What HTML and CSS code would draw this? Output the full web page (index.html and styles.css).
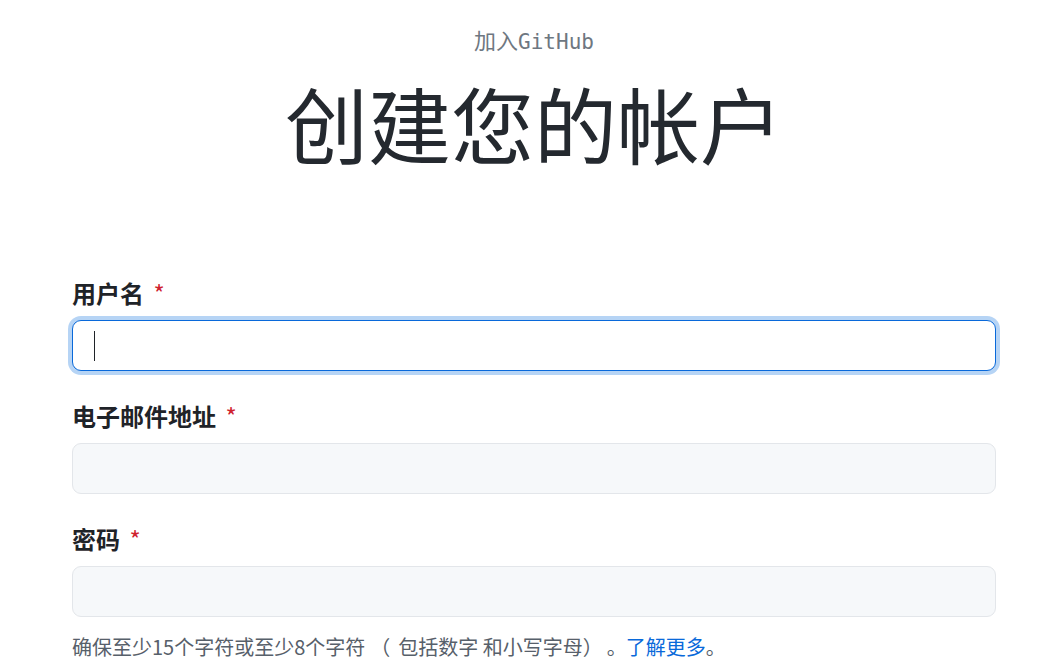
FILE: index.html
```html
<!DOCTYPE html>
<html lang="zh-CN">
<head>
<meta charset="utf-8">
<title>创建您的帐户</title>
<link rel="stylesheet" href="styles.css">
</head>
<body>
<main class="page">
  <header class="head">
    <p class="kicker">加入<span class="mono">GitHub</span></p>
    <h1 class="title">创建您的帐户</h1>
  </header>
  <form class="form">
    <div class="field">
      <label class="label">用户名 <span class="req">*</span></label>
      <div class="input focus"><span class="caret"></span></div>
    </div>
    <div class="field">
      <label class="label">电子邮件地址 <span class="req">*</span></label>
      <div class="input"></div>
    </div>
    <div class="field">
      <label class="label">密码 <span class="req">*</span></label>
      <div class="input"></div>
      <p class="hint">确保至少15个字符或至少8个字符<span class="paren-open">（</span>包括数字 和小写字母<span class="paren-close">）</span><span class="stop">。</span><a class="link" href="#">了解更多</a>。</p>
    </div>
  </form>
</main>
</body>
</html>
```
FILE: styles.css
```css
* { box-sizing: border-box; }
html, body { margin: 0; padding: 0; background: #ffffff; }
body {
  font-family: "Noto Sans CJK SC", "Noto Sans", sans-serif;
  color: #1f2328;
}
.page {
  width: 924px;
  margin-left: 72px;
}
.head {
  text-align: center;
  padding-top: 24px;
}
.kicker {
  margin: 0;
  font-size: 22px;
  line-height: 30px;
  color: #6e7781;
}
.mono { font-family: "DejaVu Sans Mono", monospace; font-size: 21px; }
.title {
  margin: 15px 0 0 0;
  font-size: 83px;
  line-height: 100px;
  font-weight: 400;
  color: #24292f;
}
.form {
  margin-top: 105px;
  display: flex;
  flex-direction: column;
  gap: 29px;
}
.field { display: flex; flex-direction: column; }
.label {
  font-size: 24px;
  line-height: 32px;
  font-weight: 700;
  color: #1f2328;
  margin-bottom: 11px;
}
.req { color: #cf222e; font-weight: 400; margin-left: 4px; }
.input {
  height: 51px;
  border: 1px solid #e3e6ea;
  border-radius: 9px;
  background: #f6f8fa;
  display: flex;
  align-items: center;
}
.input.focus {
  background: #ffffff;
  border-color: #0969da;
  box-shadow: 0 0 0 4px #b6d4f5;
}
.caret {
  width: 1px;
  height: 30px;
  background: #1f2328;
  margin-left: 21px;
}
.hint {
  margin: 16px 0 0 0;
  font-size: 20px;
  line-height: 28px;
  color: #57606a;
}
.paren-open { display: inline-block; width: 33px; padding-left: 5px; }
.paren-close { display: inline-block; width: 22px; }
.stop { display: inline-block; width: 21px; padding-left: 2px; }
.link { color: #0969da; text-decoration: none; }
```
